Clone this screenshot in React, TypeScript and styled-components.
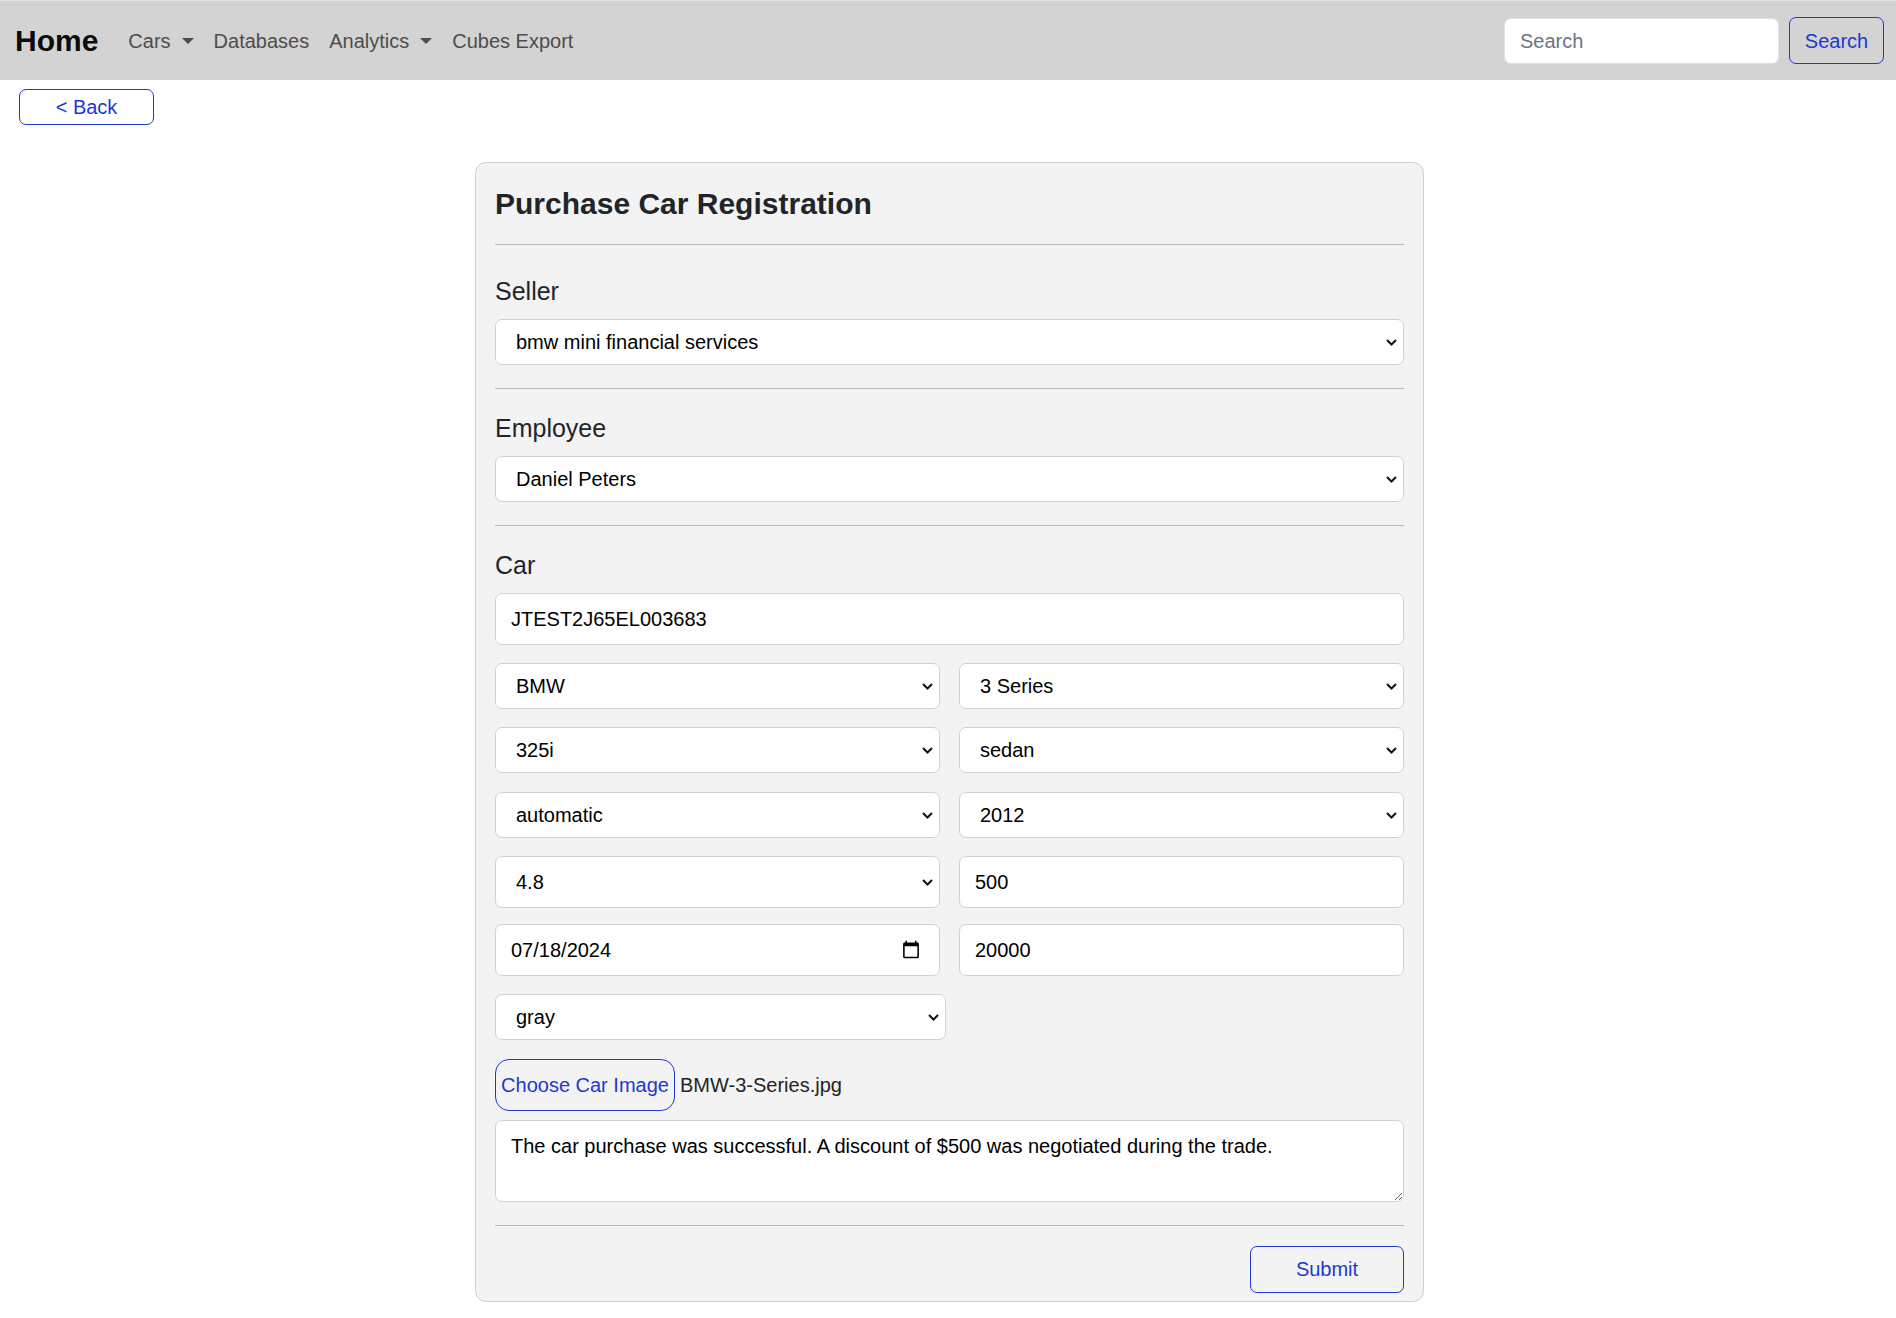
import React from "react";
import styled, { createGlobalStyle } from "styled-components";

const Global = createGlobalStyle`
  html, body { margin: 0; padding: 0; background: #fff; }
  body { font-family: "Liberation Sans", Arial, sans-serif; font-size: 20px; line-height: 1.5; color: #212529; }
  * { box-sizing: border-box; }
`;

const BLUE = "#1f38d2";
const CHEVRON =
  "url(\"data:image/svg+xml,%3Csvg xmlns='http://www.w3.org/2000/svg' width='11' height='7' viewBox='0 0 11 7'%3E%3Cpath d='M1 1l4.5 4.5L10 1' fill='none' stroke='%23111' stroke-width='2'/%3E%3C/svg%3E\")";

const Navbar = styled.nav`
  display: flex;
  align-items: center;
  height: 80px;
  padding: 0 12px 0 15px;
  background: #d3d3d3;
  border-top: 1px solid #e3e3e3;
`;
const Brand = styled.a`
  font-size: 30px;
  font-weight: 700;
  line-height: 1.5;
  color: #0b0b0b;
  margin-right: 20px;
`;
const NavList = styled.div`
  display: flex;
  flex: 1;
  align-items: center;
`;
const NavLink = styled.a`
  display: inline-flex;
  align-items: center;
  padding: 10px;
  color: #4d4d4d;
`;
const Caret = styled.span`
  display: inline-block;
  margin-left: 11px;
  border-top: 6px solid #4d4d4d;
  border-left: 6px solid transparent;
  border-right: 6px solid transparent;
`;
const SearchForm = styled.form`
  display: flex;
  align-items: center;
  gap: 10px;
`;
const SearchInput = styled.input`
  width: 275px;
  height: 46px;
  padding: 8px 15px 6px;
  border: 1px solid #dee2e6;
  border-radius: 7px;
  background: #fff;
  font: inherit;
  color: #212529;
  &::placeholder { color: #6c757d; opacity: 1; }
`;
const OutlineButton = styled.button<{ $w?: number; $h: number; $lift?: number }>`
  width: ${(p) => (p.$w ? `${p.$w}px` : "auto")};
  height: ${(p) => p.$h}px;
  padding: 0 14px ${(p) => p.$lift ?? 0}px;
  border: 1.2px solid ${BLUE};
  border-radius: 7px;
  background: transparent;
  color: ${BLUE};
  font: inherit;
`;
const BackBar = styled.div`
  padding: 9px 0 0 19px;
`;
const Card = styled.main`
  width: 949px;
  margin: 37px 472px 16px 475px;
  padding: 19px 19px 8px;
  background: #f3f3f3;
  border: 1px solid #cfcfcf;
  border-radius: 11px;
`;
const Title = styled.h1`
  margin: 4px 0 0;
  font-size: 30px;
  font-weight: 700;
  line-height: 1.2;
  color: #212529;
`;
const Divider = styled.hr<{ $top: number; $bottom: number }>`
  margin: ${(p) => p.$top}px 0 ${(p) => p.$bottom}px;
  height: 1px;
  border: 0;
  background: #b9b9b9;
`;
const SectionLabel = styled.h2`
  margin: 0 0 13px;
  font-size: 25px;
  font-weight: 400;
  line-height: 1.2;
  color: #212529;
`;
const Select = styled.select<{ $w?: number; $h?: number }>`
  display: block;
  width: ${(p) => (p.$w ? `${p.$w}px` : "100%")};
  min-width: 0;
  height: ${(p) => p.$h ?? 46}px;
  padding: 7px 24px 7px 20px;
  border: 1px solid #d0d3d6;
  border-radius: 7px;
  appearance: none;
  background: #fff ${CHEVRON} no-repeat right 6px center;
  font: inherit;
  color: #000;
`;
const TextInput = styled.input`
  display: block;
  width: 100%;
  min-width: 0;
  height: 52px;
  padding: 7px 15px;
  border: 1px solid #d0d3d6;
  border-radius: 7px;
  background: #fff;
  font: inherit;
  color: #000;
  &::-webkit-datetime-edit-month-field,
  &::-webkit-datetime-edit-day-field,
  &::-webkit-datetime-edit-year-field {
    padding: 0;
  }
  &::-webkit-calendar-picker-indicator {
    margin-right: 1px;
  }
`;
const Row = styled.div<{ $top: number }>`
  display: grid;
  grid-template-columns: repeat(2, minmax(0, 1fr));
  column-gap: 19px;
  margin-top: ${(p) => p.$top}px;
`;
const SoloRow = styled.div`
  margin-top: 18px;
`;
const FileRow = styled.div`
  display: flex;
  align-items: center;
  gap: 5px;
  margin-top: 19px;
`;
const FileButton = styled.label`
  display: inline-flex;
  align-items: center;
  justify-content: center;
  width: 180px;
  height: 52px;
  border: 1.2px solid ${BLUE};
  border-radius: 14px;
  color: ${BLUE};
  white-space: nowrap;
`;
const HiddenFile = styled.input`
  display: none;
`;
const Notes = styled.textarea`
  display: block;
  width: 100%;
  height: 82px;
  margin-top: 9px;
  padding: 10px 15px;
  border: 1px solid #d0d3d6;
  border-radius: 7px;
  background: #fff;
  font: inherit;
  color: #000;
`;
const Actions = styled.div`
  display: flex;
  justify-content: flex-end;
`;

const Choice = ({ value, w, h }: { value: string; w?: number; h?: number }) => (
  <Select $w={w} $h={h} defaultValue={value}>
    <option>{value}</option>
  </Select>
);

export default function App() {
  return (
    <>
      <Global />
      <Navbar>
        <Brand>Home</Brand>
        <NavList>
          <NavLink>Cars<Caret /></NavLink>
          <NavLink>Databases</NavLink>
          <NavLink>Analytics<Caret /></NavLink>
          <NavLink>Cubes Export</NavLink>
        </NavList>
        <SearchForm>
          <SearchInput placeholder="Search" />
          <OutlineButton type="button" $w={95} $h={47}>Search</OutlineButton>
        </SearchForm>
      </Navbar>
      <BackBar>
        <OutlineButton type="button" $w={135} $h={36}>&lt; Back</OutlineButton>
      </BackBar>
      <Card>
        <Title>Purchase Car Registration</Title>
        <Divider $top={22} $bottom={31} />
        <SectionLabel>Seller</SectionLabel>
        <Choice value="bmw mini financial services" />
        <Divider $top={23} $bottom={24} />
        <SectionLabel>Employee</SectionLabel>
        <Choice value="Daniel Peters" />
        <Divider $top={23} $bottom={24} />
        <SectionLabel>Car</SectionLabel>
        <TextInput defaultValue="JTEST2J65EL003683" />
        <Row $top={18}>
          <Choice value="BMW" />
          <Choice value="3 Series" />
        </Row>
        <Row $top={18}>
          <Choice value="325i" />
          <Choice value="sedan" />
        </Row>
        <Row $top={19}>
          <Choice value="automatic" />
          <Choice value="2012" />
        </Row>
        <Row $top={18}>
          <Choice value="4.8" h={52} />
          <TextInput defaultValue="500" />
        </Row>
        <Row $top={16}>
          <TextInput type="date" defaultValue="2024-07-18" />
          <TextInput defaultValue="20000" />
        </Row>
        <SoloRow>
          <Choice value="gray" w={451} />
        </SoloRow>
        <FileRow>
          <FileButton>
            Choose Car Image
            <HiddenFile type="file" />
          </FileButton>
          <span>BMW-3-Series.jpg</span>
        </FileRow>
        <Notes defaultValue="The car purchase was successful. A discount of $500 was negotiated during the trade." />
        <Divider $top={23} $bottom={20} />
        <Actions>
          <OutlineButton type="button" $w={154} $h={47} $lift={2}>Submit</OutlineButton>
        </Actions>
      </Card>
    </>
  );
}
